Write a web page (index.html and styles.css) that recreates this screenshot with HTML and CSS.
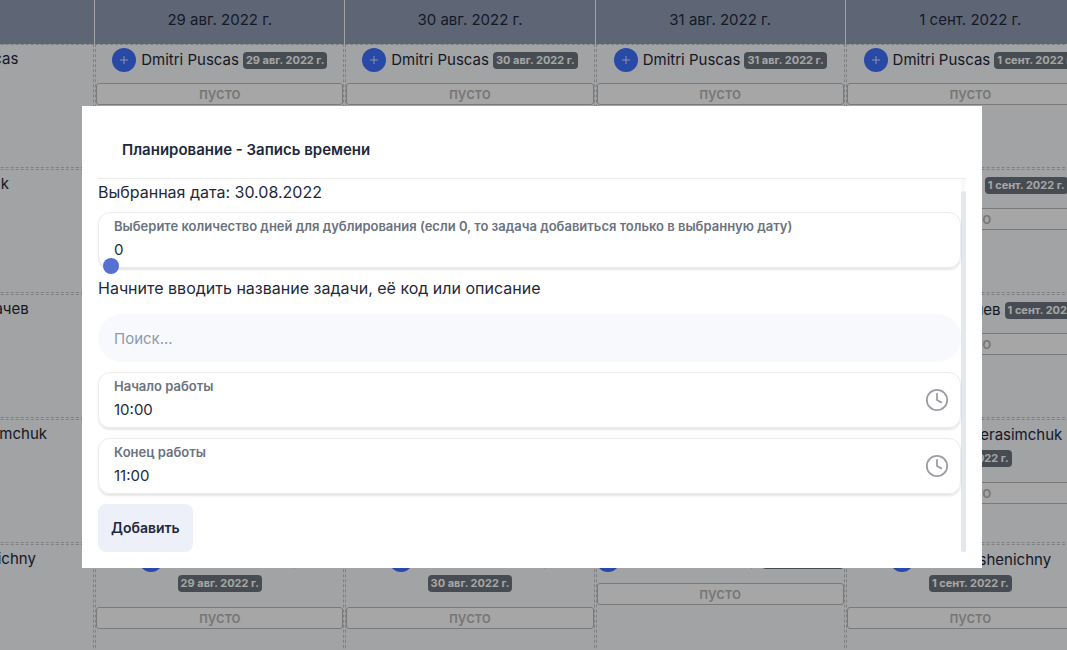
FILE: index.html
```html
<!DOCTYPE html>
<html lang="ru">
<head>
<meta charset="utf-8">
<meta name="viewport" content="width=device-width, initial-scale=1">
<title>Планирование</title>
<link rel="stylesheet" href="styles.css">
<script src="planner.js" defer></script>
</head>
<body>
<main class="board">
  <table class="schedule">
    <thead>
      <tr><th></th><th>29 авг. 2022 г.</th><th>30 авг. 2022 г.</th><th>31 авг. 2022 г.</th><th>1 сент. 2022 г.</th></tr>
    </thead>
    <tbody id="rows"></tbody>
  </table>
</main>
<div class="overlay">
  <section class="modal" role="dialog" aria-modal="true" aria-labelledby="modal-title">
    <header class="modal-header"><h2 id="modal-title" class="modal-title">Планирование - Запись времени</h2></header>
    <div class="modal-body">
      <form class="form">
        <p class="line line-date">Выбранная дата: 30.08.2022</p>
        <div class="card">
          <label class="card-label" for="days">Выберите количество дней для дублирования (если 0, то задача добавиться только в выбранную дату)</label>
          <input class="card-input" id="days" type="text" value="0">
          <input class="slider" type="range" min="0" max="30" value="0" aria-label="Количество дней">
        </div>
        <label class="line line-search" for="search">Начните вводить название задачи, её код или описание</label>
        <input class="search" id="search" type="text" placeholder="Поиск...">
        <div class="card">
          <label class="card-label" for="start">Начало работы</label>
          <input class="card-input" id="start" type="text" value="10:00">
          <svg class="clock" viewBox="0 0 24 24" aria-hidden="true"><circle cx="12" cy="12" r="10.2"/><path d="M12 5.8V12l4.3 2.4"/></svg>
        </div>
        <div class="card">
          <label class="card-label" for="end">Конец работы</label>
          <input class="card-input" id="end" type="text" value="11:00">
          <svg class="clock" viewBox="0 0 24 24" aria-hidden="true"><circle cx="12" cy="12" r="10.2"/><path d="M12 5.8V12l4.3 2.4"/></svg>
        </div>
        <button class="submit" type="submit">Добавить</button>
      </form>
      <div class="scrollbar" aria-hidden="true"><div class="scrollbar-thumb"></div></div>
    </div>
  </section>
</div>
</body>
</html>
```

FILE: planner.js
```js
const dates = ["29 авг. 2022 г.", "30 авг. 2022 г.", "31 авг. 2022 г.", "1 сент. 2022 г."];
const people = [
  { name: "Dmitri Puscas", stacked: [] },
  { name: "Ivan Popuk", stacked: [] },
  { name: "Николай Ткачев", stacked: [] },
  { name: "Anatolie Gerasimchuk", stacked: [0, 1, 2, 3] },
  { name: "Andrei Pshenichny", stacked: [0, 1, 3] }
];

const cell = (person, date, i) => `
  <td>
    <div class="entry${person.stacked.includes(i) ? " entry-stacked" : ""}">
      <div class="person">
        <button class="add" type="button" aria-label="Добавить запись"><svg viewBox="0 0 24 24" aria-hidden="true"><path d="M12 8v8M8 12h8"/></svg></button>
        <span>${person.name}</span>
      </div>
      <span class="badge">${date}</span>
    </div>
    <button class="empty" type="button">пусто</button>
  </td>`;

document.getElementById("rows").innerHTML = people.map((person) => `
  <tr>
    <td class="row-name">${person.name}</td>
    ${dates.map((date, i) => cell(person, date, i)).join("")}
  </tr>`).join("");
```

FILE: styles.css
```css
* {
  box-sizing: border-box;
}

body {
  margin: 0;
  background: #f8fafc;
  color: #1e293b;
  font-family: Inter, "Noto Sans", sans-serif;
  font-size: 15px;
  line-height: 24px;
}

button,
input {
  font: inherit;
  color: inherit;
}

.board {
  height: 100vh;
  overflow: hidden;
}

.schedule {
  width: calc(100% + 185px);
  margin-left: -156px;
  margin-top: -1px;
  table-layout: fixed;
  border-collapse: separate;
  border-spacing: 1px;
}

.schedule th {
  height: 43px;
  padding: 0 0 4px;
  background: #919db6;
  box-shadow: 0 1px #919db6;
  font-weight: 400;
}

.schedule td {
  height: 124px;
  padding: 3px 0 0;
  border: 1px dashed #c4c6c8;
  text-align: center;
  vertical-align: top;
}

.schedule .row-name {
  padding-top: 2px;
}

.entry {
  display: flex;
  align-items: center;
  justify-content: center;
  gap: 4px;
  margin-bottom: 11px;
  white-space: nowrap;
}

.entry-stacked {
  flex-direction: column;
  gap: 3px;
  margin-bottom: 15px;
}

.person {
  display: flex;
  gap: 5px;
}

.add {
  width: 24px;
  height: 24px;
  padding: 0;
  border: 0;
  border-radius: 50%;
  background: #4070ff;
}

.add svg {
  display: block;
  fill: none;
  stroke: #dbe4ff;
  stroke-width: 1;
}

.badge {
  padding: 0 3px;
  border-radius: 4px;
  background: #6c757d;
  color: #ffffff;
  font-size: 11px;
  font-weight: 700;
  line-height: 17px;
}

.empty {
  display: block;
  width: 100%;
  height: 22px;
  padding: 0;
  border: 1px solid #bcbcbc;
  border-radius: 3px;
  background: #ffffff;
  color: #b6b6b6;
  font-size: 15px;
  font-weight: 500;
  line-height: 20px;
}

.overlay {
  position: fixed;
  inset: 0;
  display: flex;
  align-items: flex-start;
  justify-content: center;
  padding: 106px 3px 0 0;
  background: rgba(0, 0, 0, 0.35);
}

.modal {
  width: 900px;
  max-width: 100%;
  padding: 16px;
  background: #ffffff;
}

.modal-header {
  padding: 16px 24px;
  border-bottom: 1px solid #eeeeee;
}

.modal-title {
  margin: 0;
  font-size: 15px;
  font-weight: 600;
  line-height: 24px;
}

.modal-body {
  display: flex;
}

.form {
  flex: 1;
  display: flex;
  flex-direction: column;
  align-items: stretch;
  gap: 10px;
}

.line {
  margin: 0;
  font-size: 16px;
  line-height: 20px;
}

.line-date {
  padding-top: 3px;
}

.line-search {
  margin-bottom: 6px;
}

.card {
  position: relative;
  display: flex;
  flex-direction: column;
  gap: 2px;
  height: 56px;
  padding: 3px 15px;
  border: 1px solid #ececec;
  border-radius: 12px;
  box-shadow: 0 2px 2px rgba(0, 0, 0, 0.1);
}

.card-label {
  color: #6b7280;
  font-size: 13px;
  font-weight: 600;
  line-height: 20px;
}

.card-input {
  width: 100%;
  padding: 0;
  border: 0;
  outline: 0;
  background: transparent;
  line-height: 24px;
}

.slider {
  position: absolute;
  left: 4px;
  right: 4px;
  bottom: -7px;
  height: 16px;
  margin: 0;
  appearance: none;
  background: transparent;
}

.slider::-webkit-slider-thumb {
  appearance: none;
  width: 16px;
  height: 16px;
  border-radius: 50%;
  background: #5570d2;
}

.clock {
  position: absolute;
  top: 15px;
  right: 11px;
  width: 24px;
  height: 24px;
  fill: none;
  stroke: #9c9ca8;
  stroke-width: 1.8;
  stroke-linecap: round;
  stroke-linejoin: round;
}

.search {
  width: 100%;
  height: 48px;
  padding: 0 16px;
  border: 0;
  border-radius: 24px;
  outline: 0;
  background: #f8f9fd;
}

.search::placeholder {
  color: #8f99ad;
  opacity: 1;
}

.submit {
  align-self: flex-start;
  height: 48px;
  padding: 0 13px;
  border: 0;
  border-radius: 8px;
  background: #edf0f8;
  font-size: 14px;
  font-weight: 600;
}

.scrollbar {
  width: 5px;
  padding-top: 12px;
  display: flex;
  background: #f8fafc;
}

.scrollbar-thumb {
  flex: 1;
  border-radius: 3px;
  background: #e2e8f0;
}
```
